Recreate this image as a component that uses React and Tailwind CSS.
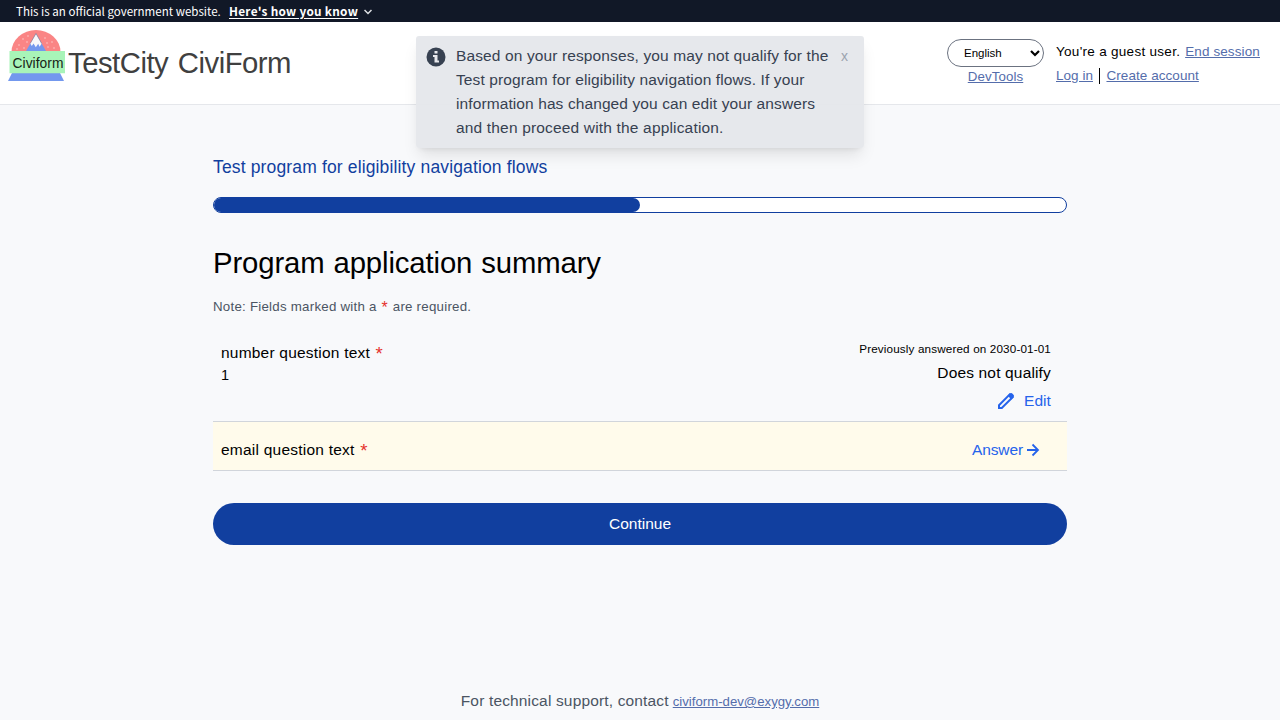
function Logo() {
  return (
    <svg className="mt-2 ml-2 h-[52px] w-[58px] shrink-0" viewBox="0 0 58 52">
      <path d="M3.5 22A24.5 22 0 0 1 52.5 22Z" fill="#fa8585" />
      <path d="M17.5 22L28 3.5L38.5 22Z" fill="#7398ee" />
      <path d="M22.2 13.5L28 3.5L33.7 13.5L31.6 16.8L30.2 13.8L27.8 17.2L25.5 13.4L23.8 16Z" fill="#f8f8fa" />
      <path d="M22.2 13.5L28 3.5L33.7 13.5" fill="none" stroke="#776f86" strokeWidth=".6" />
      <g fill="#fdd5d5">
        {[[15, 9], [20, 6], [11, 15], [19, 12], [9, 19], [16, 18], [37, 8], [44, 12], [40, 17], [46, 18], [39, 13]].map(([x, y]) => (
          <circle key={`${x}-${y}`} cx={x} cy={y} r=".7" />
        ))}
      </g>
      <path d="M4.5 42H51.5L56 51H0Z" fill="#7398ee" />
      <path d="M1.5 21H57V43.3H1.5Z" fill="#a8f4b8" />
      <text x="4.5" y="38" fontFamily="Liberation Sans, sans-serif" fontSize="13.8" textLength="51" fill="#172317">Civiform</text>
    </svg>
  );
}

function Star() {
  return <span className="ml-px inline-block translate-y-0.5 text-[1.2em] leading-none tracking-[0px] text-[#e5322d]">*</span>;
}

const link = "text-[#546dab] underline underline-offset-[1px]";

export default function App() {
  return (
    <div className="flex h-[720px] w-full flex-col bg-[#f8f9fb] font-['Liberation_Sans',Arial,sans-serif] text-black">
      <div className="flex h-[22px] shrink-0 items-center bg-[#111827] pl-4 font-['Noto_Sans_CJK_SC',sans-serif] text-[11.55px] leading-[22px] text-white">
        <span className="w-[213px] whitespace-nowrap">This is an official government website.</span>
        <b className="w-[129px] text-[11.8px] whitespace-nowrap tracking-[0.28px] underline underline-offset-[2px]">Here's how you know</b>
        <svg className="mt-0.5 ml-1.5 size-2" viewBox="0 0 8 8" fill="none" stroke="#dfe1e5" strokeWidth="1.5">
          <path d="M.5 2L4 5.5L7.5 2" />
        </svg>
      </div>

      <header className="flex h-[83px] shrink-0 border-b border-[#e5e7eb] bg-white">
        <Logo />
        <div className="mt-[23px] ml-0.5 text-[29.3px] leading-9 tracking-[-0.5px] [word-spacing:2px] whitespace-nowrap text-[#404040]">TestCity CiviForm</div>
        <div className="mt-[17px] mr-3 ml-auto flex w-[97px] flex-col items-center">
          <div className="flex h-7 w-full items-center justify-between rounded-full border border-[#6b7280] pr-[3px] pl-4 text-[11.5px]">
            <span className="pt-px">English</span>
            <svg className="size-2.5" viewBox="0 0 10 10" fill="none" stroke="black" strokeWidth="2.2">
              <path d="M1 3L5 7L9 3" />
            </svg>
          </div>
          <a className={`${link} text-[13.3px] leading-[19px] tracking-[0.1px]`}>DevTools</a>
        </div>
        <div className="mt-[18px] w-[224px] text-[13.5px] leading-6 whitespace-nowrap">
          <div className="flex h-6 justify-between pr-5">
            <span className="tracking-[0.29px]">You're a guest user.</span>
            <a className={`${link} tracking-[0.12px]`}>End session</a>
          </div>
          <div className="flex h-6 items-center">
            <a className={`${link} tracking-[0.03px]`}>Log in</a>
            <span className="mr-1.5 ml-1.5 h-4 w-[1.5px] bg-black" />
            <a className={`${link} tracking-[0.06px]`}>Create account</a>
          </div>
        </div>
      </header>

      <main className="mx-auto flex w-[854px] flex-col pt-12">
        <div className="h-7 text-[17.5px] leading-7 tracking-[0.146px] text-[#113f9f]">Test program for eligibility navigation flows</div>
        <div className="mt-4 h-4 overflow-hidden rounded-full border border-[#113f9f] bg-white">
          <div className="h-full w-1/2 rounded-r-full bg-[#113f9f]" />
        </div>
        <h1 className="mt-8 h-9 text-[29.3px] leading-9 tracking-[-0.12px] [word-spacing:1px]">Program application summary</h1>
        <div className="mt-4 h-5 text-[13.3px] leading-5 tracking-[0.24px] text-[#4b5563]">
          Note: Fields marked with a <Star /> <span className="ml-px">are required.</span>
        </div>

        <section className="mt-6 flex h-[81px] justify-between border-b border-[#d1d5db] pr-4 pl-2">
          <div>
            <div className="h-6 text-[15.5px] leading-6 tracking-[0.21px]">number question text <Star /></div>
            <div className="text-[14.5px] leading-5">1</div>
          </div>
          <div className="flex flex-col items-end">
            <div className="h-5 text-[11.7px] leading-4 tracking-[0.14px]">Previously answered on 2030-01-01</div>
            <div className="h-6 text-[15.5px] leading-6 tracking-[0.16px]">Does not qualify</div>
            <div className="mt-1 flex h-6 items-center gap-2 text-[15.5px] leading-6 tracking-[0.07px] text-[#2563eb]">
              <svg className="size-5" viewBox="0 0 20 20" fill="none" stroke="currentColor" strokeWidth="2">
                <path d="M3 14.2L13.8 3.4L16.6 6.2L5.8 17H3Z" />
                <path d="M11.6 4.6L14.2 2.2Q15.1 1.6 16 2.2L17.7 3.9Q18.5 4.9 17.7 5.8L15.3 8.4Z" fill="currentColor" stroke="none" />
              </svg>
              <span>Edit</span>
            </div>
          </div>
        </section>
        <section className="flex h-[49px] justify-between border-b border-[#d1d5db] bg-[#fffbeb] pt-4 pr-[27px] pl-2 text-[15.5px] leading-6">
          <div className="tracking-[0.23px]">email question text <Star /></div>
          <a className="flex h-6 items-center gap-[3px] text-[#2563eb]">
            <span className="tracking-[-0.1px]">Answer</span>
            <svg className="size-[14px]" viewBox="0 0 14 14" fill="none" stroke="currentColor" strokeWidth="1.8">
              <path d="M1 7H12M6.5 1.5L12 7L6.5 12.5" />
            </svg>
          </a>
        </section>
        <button className="mt-8 h-[42px] rounded-full bg-[#113f9f] text-[15.5px] text-white">Continue</button>
      </main>

      <footer className="mt-auto flex h-[31px] items-baseline justify-center gap-1 text-[15.5px] leading-6 text-[#4b5563]">
        <span className="tracking-[0.155px]">For technical support, contact</span>
        <a className={`${link} text-[13.2px]`}>civiform-dev@exygy.com</a>
      </footer>

      <div className="absolute top-9 left-[416px] flex h-28 w-[448px] rounded-[3px] bg-[#e5e7eb]/95 p-2 text-[#374151] shadow-lg">
        <svg className="mt-[3px] ml-0.5 size-5 shrink-0" viewBox="0 0 20 20">
          <circle cx="10" cy="10" r="9.5" fill="#374151" />
          <path d="M8.5 4H11.5V6.5H8.5ZM7 8H11.5V13.5H13V15.5H8.5V10H7Z" fill="#e7e8ec" />
        </svg>
        <div className="ml-2.5 w-[374px] text-[15.5px] leading-6 tracking-[0.12px] whitespace-nowrap">
          Based on your responses, you may not qualify for the<br />
          Test program for eligibility navigation flows. If your<br />
          <span className="tracking-[0.1px]">information has changed you can edit your answers</span><br />
          <span className="tracking-[0.17px]">and then proceed with the application.</span>
        </div>
        <span className="ml-[11px] text-[14px] leading-6 text-[#9ca3af]">x</span>
      </div>
    </div>
  );
}
